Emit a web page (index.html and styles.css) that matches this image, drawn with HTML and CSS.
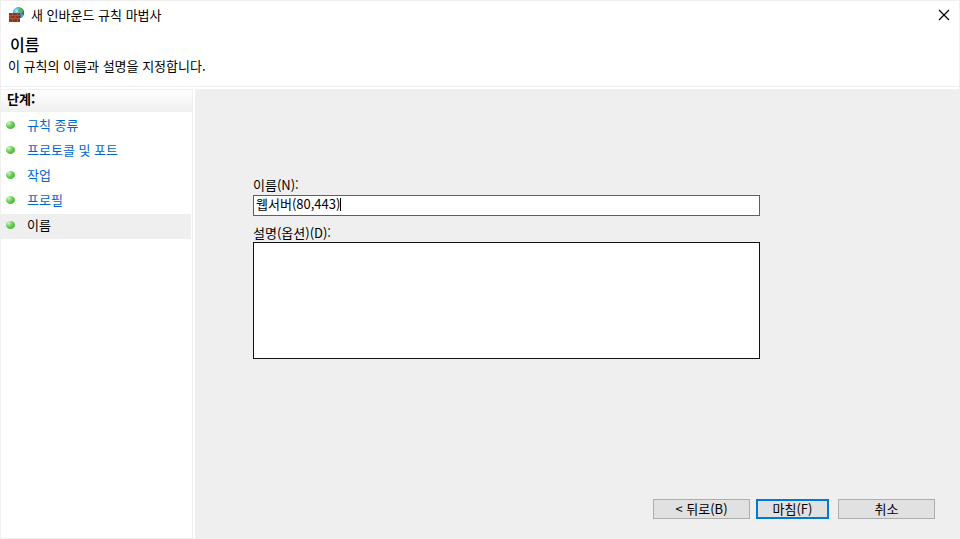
FILE: index.html
```html
<!DOCTYPE html>
<html lang="ko">
<head>
    <meta charset="UTF-8">
    <meta name="viewport" content="width=device-width, initial-scale=1.0">
    <title>새 인바운드 규칙 마법사</title>
    <link rel="stylesheet" href="styles.css">
</head>
<body>
    <div class="wizard">
        <header class="titlebar">
            <svg class="app-icon" width="16" height="16" viewBox="0 0 16 16" aria-hidden="true">
                <defs>
                    <radialGradient id="globe" cx="0.35" cy="0.35" r="0.75">
                        <stop offset="0" stop-color="#b9ecfb"/>
                        <stop offset="0.5" stop-color="#3a9be6"/>
                        <stop offset="1" stop-color="#153f9b"/>
                    </radialGradient>
                </defs>
                <circle cx="9.500" cy="5.700" r="5.700" fill="url(#globe)"/>
                <path d="M10 1l2 0 2 3-1 2-2 0-2-2zM12 8l2-1 0 2-2 2z" fill="#5ab944"/>
                <path d="M0 6h11v9H0z" fill="#8e3522"/>
                <path d="M0 8.500h11M0 11.500h11M3.500 6v2.500M8.500 6v2.500M1.500 8.500v3M6 8.500v3M3.500 11.500V15M8.500 11.500V15" stroke="#b5694f" stroke-width="0.600" fill="none"/>
            </svg>
            <span class="window-title">새 인바운드 규칙 마법사</span>
            <button type="button" class="close" aria-label="닫기">
                <svg width="12" height="12" viewBox="0 0 12 12" aria-hidden="true">
                    <path d="M1 1l10 10M11 1L1 11" stroke="#000" stroke-width="1.200" fill="none"/>
                </svg>
            </button>
        </header>

        <div class="intro">
            <h1>이름</h1>
            <p>이 규칙의 이름과 설명을 지정합니다.</p>
        </div>

        <div class="content">
            <nav class="steps">
                <h2>단계:</h2>
                <ul>
                    <li><span class="bullet"></span><a href="#">규칙 종류</a></li>
                    <li><span class="bullet"></span><a href="#">프로토콜 및 포트</a></li>
                    <li><span class="bullet"></span><a href="#">작업</a></li>
                    <li><span class="bullet"></span><a href="#">프로필</a></li>
                    <li class="current"><span class="bullet"></span>이름</li>
                </ul>
            </nav>

            <form class="panel">
                <div class="fields">
                    <label for="name">이름(N):</label>
                    <input type="text" id="name" value="웹서버(80,443)" autocomplete="off" autofocus>
                    <label for="description">설명(옵션)(D):</label>
                    <textarea id="description"></textarea>
                </div>
                <div class="actions">
                    <button type="button" class="btn">&lt; 뒤로(B)</button>
                    <button type="submit" class="btn finish">마침(F)</button>
                    <button type="button" class="btn cancel">취소</button>
                </div>
            </form>
        </div>
    </div>

    <script>
        // put the caret after the text
        const nameInput = document.getElementById('name');
        nameInput.focus();
        nameInput.setSelectionRange(nameInput.value.length, nameInput.value.length);
        nameInput.addEventListener('input', () => nameInput.classList.add('edited'));
    </script>
</body>
</html>
```
FILE: styles.css
```css
* {
    box-sizing: border-box;
}

body {
    margin: 0;
    font-family: "Noto Sans CJK KR", sans-serif;
    font-size: 13px;
    line-height: 18px;
    color: #000;
}

h1, h2, p, ul {
    margin: 0;
    padding: 0;
}

input, textarea, button {
    font: inherit;
    color: inherit;
}

.wizard {
    display: flex;
    flex-direction: column;
    min-height: 100vh;
    border: 1px solid #efefef;
    background-color: #fff;
}

/* title bar */
.titlebar {
    display: flex;
    align-items: center;
    height: 28px;
    padding: 0 8px;
}

.window-title {
    flex: 1;
    margin-left: 6px;
}

.close {
    display: flex;
    padding: 2px 1px;
    border: none;
    background: none;
}

.intro {
    padding: 5px 7px 11px;
    border-bottom: 1px solid #efefef;
}

.intro h1 {
    padding-left: 2px;
    font-size: 16px;
    font-weight: 500;
    line-height: 20px;
}

.intro p {
    margin-top: 3px;
}

.content {
    display: flex;
    flex: 1;
    margin-top: 2px;
}

/* step list */
.steps {
    width: 192px;
    border-top: 1px solid #efefef;
    border-right: 1px solid #efefef;
}

.steps h2 {
    height: 22px;
    padding-left: 6px;
    font-size: 13px;
    font-weight: 700;
    line-height: 18px;
    background: linear-gradient(#fff, #efefef);
}

.steps ul {
    margin: 2px 1px 0 0;
    list-style: none;
}

.steps li {
    display: flex;
    align-items: center;
    height: 25px;
    padding: 0 0 3px 5px;
}

.steps .current {
    background-color: #efefef;
}

.steps a {
    color: #0066cc;
    text-decoration: none;
}

.bullet {
    width: 9px;
    height: 8px;
    margin-right: 12px;
    border-radius: 50%;
    background: radial-gradient(circle at 30% 25%, #d5f0cf, #5cc943 50%, #3fae35);
}

/* form */
.panel {
    display: flex;
    flex: 1;
    flex-direction: column;
    justify-content: space-between;
    margin-left: 2px;
    padding: 87px 24px 19px 58px;
    background-color: #efefef;
}

.fields {
    display: flex;
    flex-direction: column;
    margin-right: 175px;
}

.fields input {
    height: 21px;
    margin: 1px 0 8px;
    padding: 0 2px 4px;
    border: 1px solid #0078d7;
    background-color: #fff;
    outline: none;
}

/* steady caret until the first edit */
.fields input:focus:not(.edited) {
    background: #fff linear-gradient(#000, #000) 86px 2px / 1px 13px no-repeat;
    caret-color: transparent;
}

.fields textarea {
    height: 117px;
    padding: 1px 3px;
    border: 1px solid #111;
    background-color: #fff;
    outline: none;
    resize: none;
}

.actions {
    display: flex;
    justify-content: flex-end;
}

.btn {
    width: 97px;
    height: 20px;
    padding: 0;
    border: 1px solid #adadad;
    line-height: 16px;
    background-color: #e1e1e1;
}

.finish {
    width: 73px;
    margin: 0 9px 0 6px;
    border: 2px solid #0078d7;
}
```
